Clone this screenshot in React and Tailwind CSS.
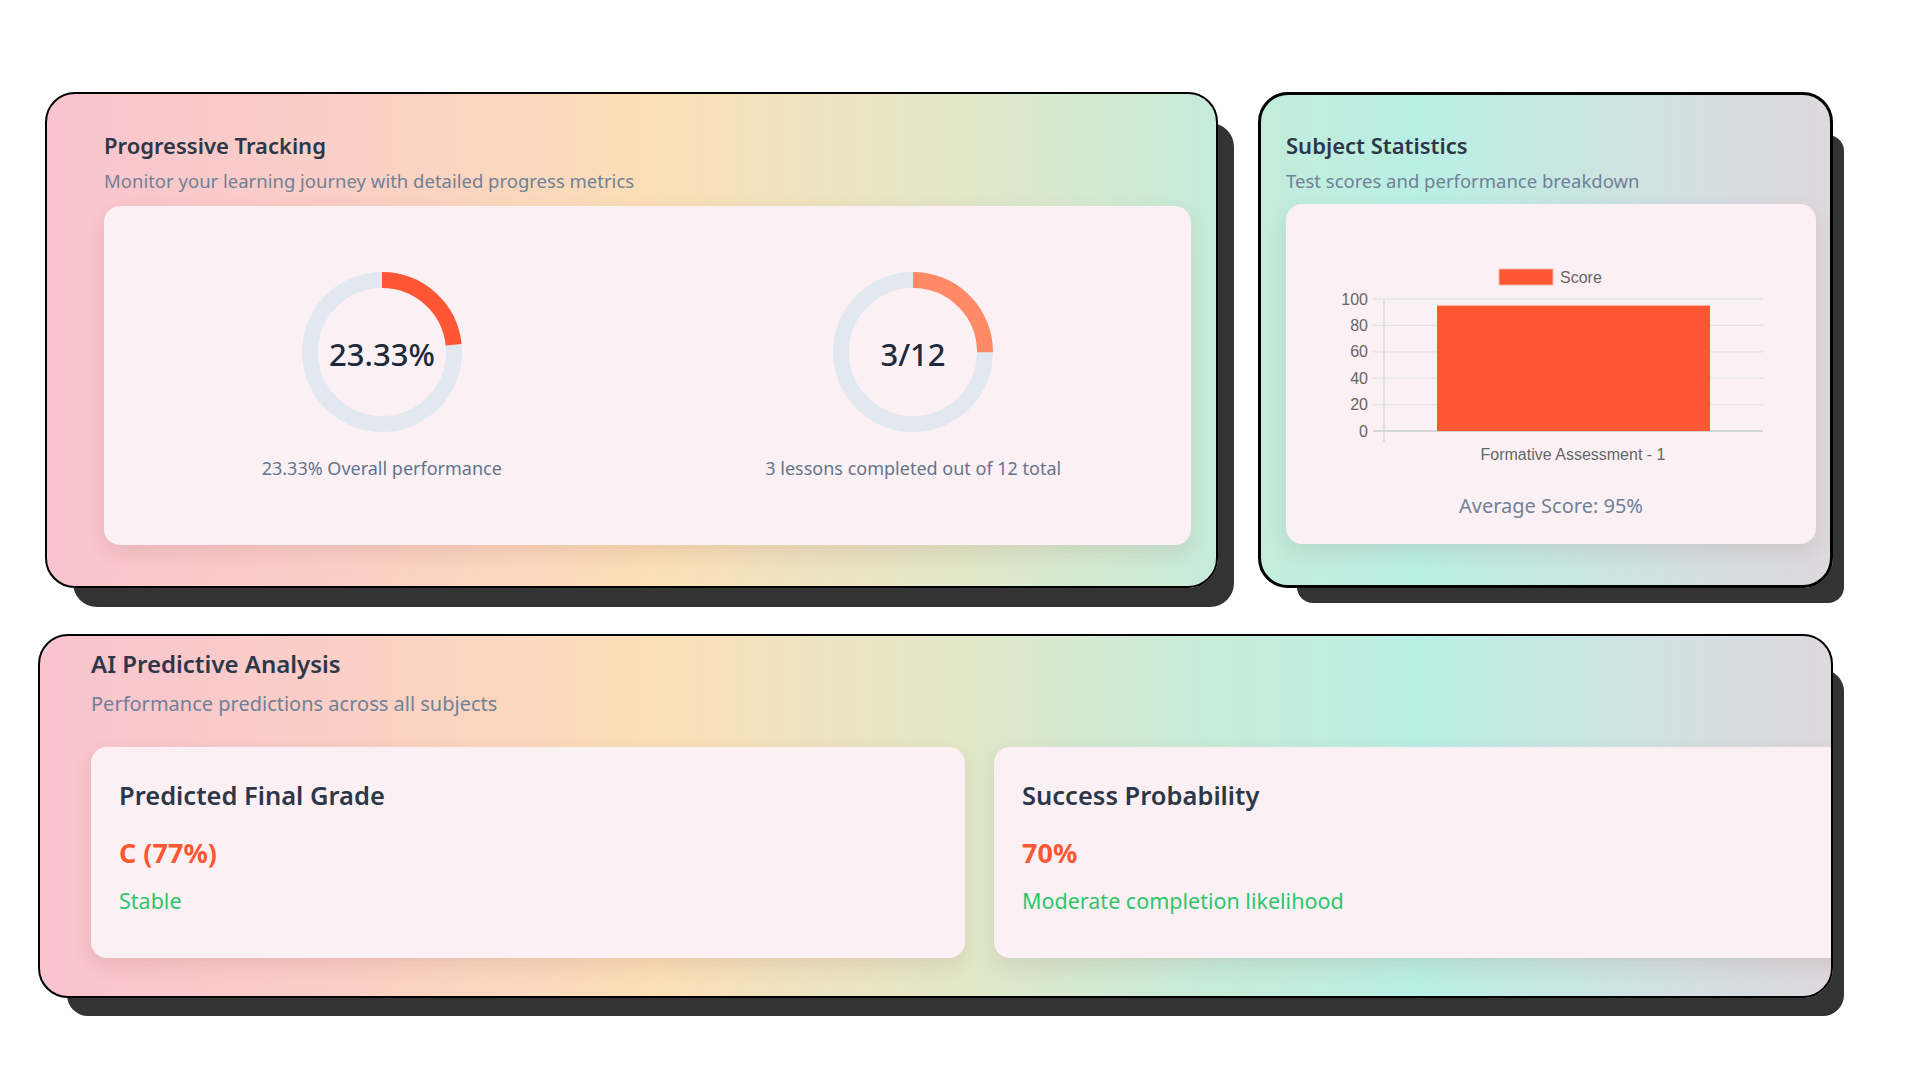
import React from 'react';

const cardBg =
  'bg-fixed bg-[linear-gradient(90deg,#f8c2d0_0%,#fbcfc6_18%,#fbdfb6_34%,#e2e7c8_50%,#c6ebd9_63%,#b9efe3_74%,#d4e0e0_88%,#e4d4dc_100%)]';

function Donut({ percent, color, label }) {
  const r = 72;
  const c = 2 * Math.PI * r;
  const dash = (percent / 100) * c;
  return (
    <svg width="160" height="160" viewBox="0 0 160 160">
      <circle cx="80" cy="80" r={r} fill="none" stroke="#e2e8f0" strokeWidth="16" />
      <circle
        cx="80"
        cy="80"
        r={r}
        fill="none"
        stroke={color}
        strokeWidth="16"
        strokeDasharray={`${dash} ${c}`}
        transform="rotate(-90 80 80)"
      />
      <text
        x="80"
        y="86"
        textAnchor="middle"
        dominantBaseline="middle"
        fontSize="31"
        fontWeight="500"
        fill="#1e293b"
        fontFamily="'Noto Sans', sans-serif"
      >
        {label}
      </text>
    </svg>
  );
}

function ScoreChart() {
  const ticks = [100, 80, 60, 40, 20, 0];
  const y0 = 227;
  const step = 26.4;
  return (
    <svg width="530" height="270" viewBox="0 0 530 270" fontFamily="'Liberation Sans', Arial, sans-serif">
      {/* legend */}
      <rect x="213" y="65" width="54" height="16" fill="#ff5733" stroke="#ffb3a3" strokeWidth="1" />
      <text x="274" y="79" fontSize="16" fill="#666">Score</text>
      {ticks.map((t) => {
        const y = y0 - (t / 100) * (step * 5);
        return (
          <g key={t}>
            <line x1="87" x2="477" y1={y} y2={y} stroke="#e3e3e3" strokeWidth="1.3" />
            <text x="82" y={y + 5.5} fontSize="16" fill="#666" textAnchor="end">
              {t}
            </text>
          </g>
        );
      })}
      <line x1="98" x2="98" y1={y0 - step * 5} y2={y0 + 11} stroke="#d6d6d6" strokeWidth="1.3" />
      <line x1="87" x2="477" y1={y0} y2={y0} stroke="#cfcfcf" strokeWidth="1.3" />
      <rect x="151" y={y0 - 0.95 * step * 5} width="273" height={0.95 * step * 5} fill="#ff5733" />
      <text x="287" y="256" fontSize="16" fill="#666" textAnchor="middle">
        Formative Assessment - 1
      </text>
    </svg>
  );
}

function PredictCard({ title, value, note }) {
  return (
    <div className="bg-[#fbf1f4] rounded-2xl shadow-[0_8px_20px_rgba(120,60,60,0.12)] h-[211px] px-7 pt-8">
      <h3 className="text-[25.5px] leading-8 font-semibold text-[#2d3748]">{title}</h3>
      <p className="mt-[26px] text-[27px] leading-8 font-bold text-[#ff5733]">{value}</p>
      <p className="mt-[18px] text-[21.5px] leading-7 text-[#2fc56a]">{note}</p>
    </div>
  );
}

export default function App() {
  return (
    <div
      className="min-h-screen bg-white pt-[92px]"
      style={{ fontFamily: "'Noto Sans', 'Open Sans', sans-serif" }}
    >
      <div className="flex gap-[40px] pl-[45px]">
        {/* Progressive Tracking */}
        <div
          className={`${cardBg} w-[1173px] h-[496px] flex flex-col border-2 border-black rounded-[30px] pl-[57px] pr-[25px] pt-[36px] pb-[41px] shadow-[22px_25px_0_-6px_#333]`}
        >
          <h2 className="text-[22px] leading-[30px] font-semibold text-[#2d3748]">Progressive Tracking</h2>
          <p className="mt-2 text-[18.5px] leading-[26px] text-[#718096]">
            Monitor your learning journey with detailed progress metrics
          </p>
          <div className="mt-[12px] flex-1 bg-[#fbf1f4] rounded-2xl shadow-[0_8px_20px_rgba(120,60,60,0.12)] grid grid-cols-2 gap-8 px-7 items-center">
            <div className="flex flex-col items-center">
              <Donut percent={23.33} color="#ff5733" label="23.33%" />
              <p className="mt-6 text-[18px] leading-6 text-[#64748b]">23.33% Overall performance</p>
            </div>
            <div className="flex flex-col items-center">
              <Donut percent={25} color="#ff8a65" label="3/12" />
              <p className="mt-6 text-[18px] leading-6 text-[#64748b]">3 lessons completed out of 12 total</p>
            </div>
          </div>
        </div>

        {/* Subject Statistics */}
        <div
          className={`${cardBg} w-[575px] h-[496px] flex flex-col border-[3px] border-black rounded-[30px] pl-[25px] pr-[14px] pt-[35px] pb-[41px] shadow-[25px_29px_0_-14px_#333]`}
        >
          <h2 className="text-[22px] leading-[30px] font-semibold text-[#2d3748]">Subject Statistics</h2>
          <p className="mt-2 text-[18.5px] leading-[26px] text-[#718096]">Test scores and performance breakdown</p>
          <div className="mt-[10px] flex-1 bg-[#fbf1f4] rounded-2xl shadow-[0_8px_20px_rgba(120,60,60,0.12)] flex flex-col items-center">
            <ScoreChart />
            <p className="mt-[18px] text-[20px] leading-7 text-[#718096]">Average Score: 95%</p>
          </div>
        </div>
      </div>

      {/* AI Predictive Analysis */}
      <div className="pl-[38px] mt-[46px]">
        <div
          className={`${cardBg} w-[1795px] h-[364px] overflow-hidden border-2 border-black rounded-[30px] pl-[51px] pt-[13px] shadow-[20px_27px_0_-9px_#333]`}
        >
          <h2 className="text-[24px] leading-[30px] font-semibold text-[#2d3748]">AI Predictive Analysis</h2>
          <p className="mt-3 text-[20px] leading-[26px] text-[#718096]">Performance predictions across all subjects</p>
          <div className="mt-[30px] grid grid-cols-[874px_874px] gap-[29px]">
            <PredictCard title="Predicted Final Grade" value="C (77%)" note="Stable" />
            <PredictCard title="Success Probability" value="70%" note="Moderate completion likelihood" />
          </div>
        </div>
      </div>
    </div>
  );
}
